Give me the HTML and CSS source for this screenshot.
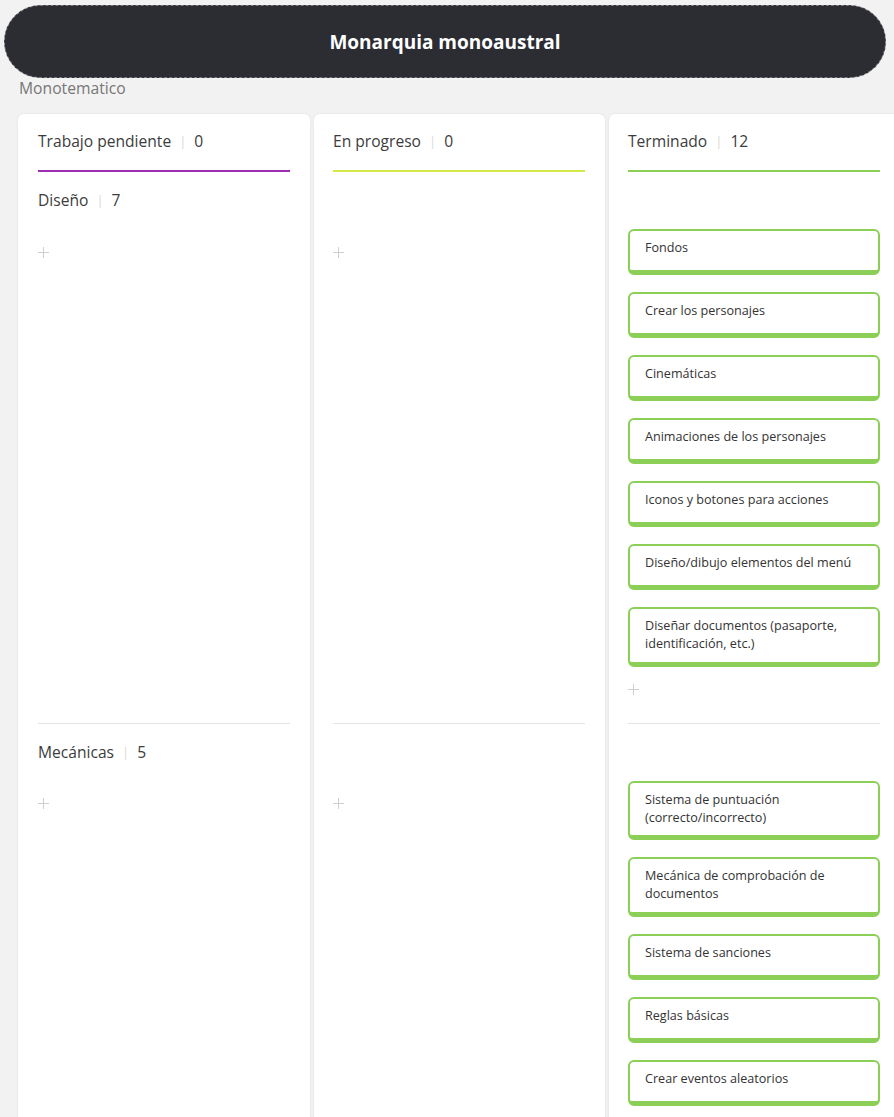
FILE: index.html
```html
<!DOCTYPE html>
<html lang="es">
<head>
<meta charset="utf-8">
<title>Monarquia monoaustral</title>
<link rel="stylesheet" href="styles.css">
</head>
<body>
<header class="board-title">Monarquia monoaustral</header>
<div class="board-sub">Monotematico</div>

<main class="board">
  <!-- column backgrounds -->
  <div class="col-bg c1"></div>
  <div class="col-bg c2"></div>
  <div class="col-bg c3"></div>

  <!-- header row -->
  <div class="cell col-head first c1">
    <div class="col-title purple">Trabajo pendiente<span class="sep">|</span>0</div>
  </div>
  <div class="cell col-head c2">
    <div class="col-title lime">En progreso<span class="sep">|</span>0</div>
  </div>
  <div class="cell col-head c3">
    <div class="col-title green">Terminado<span class="sep">|</span>12</div>
  </div>

  <!-- lane 1 -->
  <div class="cell lane r2 first c1">
    <div class="lane-inner divided">
      <div class="lane-head">Diseño<span class="sep">|</span>7</div>
      <div class="lane-body">
        <div class="cards"></div>
        <div class="add"><svg width="11" height="11" viewBox="0 0 11 11"><path d="M5.5 0v11M0 5.5h11" stroke="#cfcfcf" stroke-width="1"/></svg></div>
      </div>
    </div>
  </div>
  <div class="cell lane r2 c2">
    <div class="lane-inner divided">
      <div class="lane-head"></div>
      <div class="lane-body">
        <div class="cards"></div>
        <div class="add"><svg width="11" height="11" viewBox="0 0 11 11"><path d="M5.5 0v11M0 5.5h11" stroke="#cfcfcf" stroke-width="1"/></svg></div>
      </div>
    </div>
  </div>
  <div class="cell lane r2 c3">
    <div class="lane-inner divided">
      <div class="lane-head"></div>
      <div class="lane-body">
        <div class="cards">
          <div class="card">Fondos</div>
          <div class="card">Crear los personajes</div>
          <div class="card">Cinemáticas</div>
          <div class="card">Animaciones de los personajes</div>
          <div class="card">Iconos y botones para acciones</div>
          <div class="card">Diseño/dibujo elementos del menú</div>
          <div class="card">Diseñar documentos (pasaporte, identificación, etc.)</div>
        </div>
        <div class="add"><svg width="11" height="11" viewBox="0 0 11 11"><path d="M5.5 0v11M0 5.5h11" stroke="#cfcfcf" stroke-width="1"/></svg></div>
      </div>
    </div>
  </div>

  <!-- lane 2 -->
  <div class="cell lane r3 first c1">
    <div class="lane-inner">
      <div class="lane-head">Mecánicas<span class="sep">|</span>5</div>
      <div class="lane-body">
        <div class="cards"></div>
        <div class="add"><svg width="11" height="11" viewBox="0 0 11 11"><path d="M5.5 0v11M0 5.5h11" stroke="#cfcfcf" stroke-width="1"/></svg></div>
      </div>
    </div>
  </div>
  <div class="cell lane r3 c2">
    <div class="lane-inner">
      <div class="lane-head"></div>
      <div class="lane-body">
        <div class="cards"></div>
        <div class="add"><svg width="11" height="11" viewBox="0 0 11 11"><path d="M5.5 0v11M0 5.5h11" stroke="#cfcfcf" stroke-width="1"/></svg></div>
      </div>
    </div>
  </div>
  <div class="cell lane r3 c3">
    <div class="lane-inner">
      <div class="lane-head"></div>
      <div class="lane-body">
        <div class="cards">
          <div class="card">Sistema de puntuación (correcto/incorrecto)</div>
          <div class="card">Mecánica de comprobación de documentos</div>
          <div class="card">Sistema de sanciones</div>
          <div class="card">Reglas básicas</div>
          <div class="card">Crear eventos aleatorios</div>
        </div>
        <div class="add"><svg width="11" height="11" viewBox="0 0 11 11"><path d="M5.5 0v11M0 5.5h11" stroke="#cfcfcf" stroke-width="1"/></svg></div>
      </div>
    </div>
  </div>
</main>
</body>
</html>
```

FILE: styles.css
```css
html, body {
  overflow: hidden;
}
body {
  margin: 0;
  background: #f2f2f2;
  font-family: "Open Sans", "Noto Sans", sans-serif;
  color: #3c3c3c;
}

.board-title {
  margin: 5px 0 0 4px;
  width: 882px;
  height: 73px;
  box-sizing: border-box;
  border: 1px dashed #7a7b80;
  border-radius: 37px;
  background: #2c2d33;
  color: #fff;
  font-size: 19px;
  font-weight: 700;
  display: flex;
  align-items: center;
  justify-content: center;
}

.board-sub {
  margin: 0 0 0 19px;
  font-size: 15.7px;
  line-height: 21px;
  color: #777;
}

.board {
  margin: 15px 0 0 18px;
  display: grid;
  grid-template-columns: 292px 291px 291px;
  grid-template-rows: auto auto auto;
  column-gap: 4px;
  width: 882px;
}

.c1 { grid-column: 1; }
.c2 { grid-column: 2; }
.c3 { grid-column: 3; }
.r2 { grid-row: 2; }
.r3 { grid-row: 3; }

.col-bg {
  grid-row: 1 / 4;
  background: #fff;
  border-radius: 6px 6px 0 0;
  box-shadow: 0 0 3px rgba(0, 0, 0, 0.08);
}

.cell {
  position: relative;
  padding: 0 20px 0 19px;
}
.cell.first {
  padding-left: 20px;
}

.col-head {
  grid-row: 1;
  padding-top: 16px;
}

.col-title {
  font-size: 15.6px;
  line-height: 22px;
  padding-bottom: 17px;
  border-bottom: 2px solid #ccc;
}
.col-title.purple { border-bottom-color: #9c2fb0; }
.col-title.lime { border-bottom-color: #d5e84a; }
.col-title.green { border-bottom-color: #8ccf57; }

.sep {
  color: #d8d8d8;
  font-size: 13px;
  margin: 0 8px 0 8px;
  position: relative;
  top: -1px;
}

.lane {
  display: flex;
  flex-direction: column;
}

.lane-inner {
  flex: 1;
  display: flex;
  flex-direction: column;
  padding-bottom: 26px;
}
.lane-inner.divided {
  border-bottom: 1px solid #e2e2e2;
}

.lane-head {
  height: 22px;
  margin: 17px 0 18px;
  font-size: 15.6px;
  line-height: 22px;
}

.lane-body {
  display: flex;
  flex-direction: column;
  gap: 16px;
}

.cards {
  display: flex;
  flex-direction: column;
  gap: 17px;
}

.card {
  box-sizing: border-box;
  min-height: 46px;
  border: 2px solid #8ccf57;
  border-bottom-width: 5px;
  border-radius: 6px;
  padding: 8px 15px 8px;
  font-size: 12.6px;
  line-height: 18.3px;
  color: #333;
  background: #fff;
}

.add {
  height: 14px;
  display: flex;
  align-items: center;
}
```
